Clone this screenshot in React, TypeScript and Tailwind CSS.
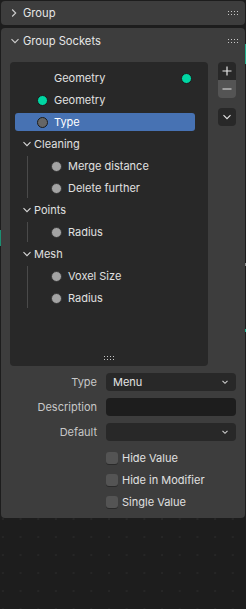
import React from 'react';

const font = { fontFamily: 'Inter, "DejaVu Sans", sans-serif' };

function Chevron({ open, className = '' }: { open: boolean; className?: string }) {
  return (
    <svg width="10" height="10" viewBox="0 0 10 10" className={`shrink-0 ${className}`}>
      {open ? (
        <path d="M1.5 3.2 L5 6.7 L8.5 3.2" fill="none" stroke="currentColor" strokeWidth="1.1" />
      ) : (
        <path d="M3.2 1.5 L6.7 5 L3.2 8.5" fill="none" stroke="currentColor" strokeWidth="1.1" />
      )}
    </svg>
  );
}

function Grip({ className = '' }: { className?: string }) {
  return (
    <div className={`grid grid-cols-4 gap-x-[2px] gap-y-[2px] ${className}`}>
      {Array.from({ length: 8 }).map((_, i) => (
        <span key={i} className="w-[1px] h-[1px] bg-[#c8c8c8]" />
      ))}
    </div>
  );
}

function Socket({ color }: { color: string }) {
  return <span className={`block shrink-0 w-[11px] h-[11px] rounded-full border ${color}`} />;
}

type Item =
  | { kind: 'out'; label: string }
  | { kind: 'in'; label: string; color: string; selected?: boolean }
  | { kind: 'panel'; label: string; children: string[] };

const items: Item[] = [
  { kind: 'out', label: 'Geometry' },
  { kind: 'in', label: 'Geometry', color: 'bg-[#00d6a3] border-[#1b1b1b]' },
  { kind: 'in', label: 'Type', color: 'bg-[#666666] border-[#1b1b1b]', selected: true },
  { kind: 'panel', label: 'Cleaning', children: ['Merge distance', 'Delete further'] },
  { kind: 'panel', label: 'Points', children: ['Radius'] },
  { kind: 'panel', label: 'Mesh', children: ['Voxel Size', 'Radius'] },
];

function Row({ item }: { item: Item }) {
  if (item.kind === 'out') {
    return (
      <div className="h-[22px] flex items-center">
        <span className="ml-[39px] text-[#e0e0e0]">{item.label}</span>
        <span className="ml-auto mr-[16px]">
          <Socket color="bg-[#00d6a3] border-[#1b1b1b]" />
        </span>
      </div>
    );
  }
  if (item.kind === 'in') {
    return (
      <div className="h-[22px] flex items-center">
        <div
          className={`h-[18px] w-[180px] flex items-center rounded-[3px] ${
            item.selected ? 'bg-[#4772b3] text-white' : 'text-[#e0e0e0]'
          }`}
        >
          <span className="ml-[22px]">
            <Socket color={item.color} />
          </span>
          <span className="ml-[6px]">{item.label}</span>
        </div>
      </div>
    );
  }
  return (
    <div>
      <div className="h-[22px] flex items-center text-[#e0e0e0]">
        <Chevron open className="ml-[7px] text-[#d8d8d8]" />
        <span className="ml-[2px]">{item.label}</span>
      </div>
      <div className="relative">
        <span className="absolute left-[12px] top-[1px] bottom-[1px] w-[1px] bg-[#4a4a4a]" />
        {item.children.map((c, i) => (
          <div key={i} className="h-[22px] flex items-center text-[#e0e0e0]">
            <span className="ml-[36px]">
              <Socket color="bg-[#a3a3a3] border-[#333333]" />
            </span>
            <span className="ml-[6px]">{c}</span>
          </div>
        ))}
      </div>
    </div>
  );
}

function Field({ label, value, dropdown }: { label: string; value?: string; dropdown?: boolean }) {
  return (
    <div className="flex items-center h-[18px]">
      <span className="w-[87px] text-right text-[#c8c8c8]">{label}</span>
      <div
        className={`ml-[9px] w-[130px] h-[18px] rounded-[4px] flex items-center px-[7px] ${
          dropdown ? 'bg-[#282828]' : 'bg-[#1d1d1d]'
        }`}
      >
        <span className="text-[#e4e4e4]">{value}</span>
        {dropdown && (
          <svg width="8" height="8" viewBox="0 0 8 8" className="ml-auto text-[#cfcfcf]">
            <path d="M1.5 2.8 L4 5.3 L6.5 2.8" fill="none" stroke="currentColor" strokeWidth="1.1" />
          </svg>
        )}
      </div>
    </div>
  );
}

function Check({ label }: { label: string }) {
  return (
    <div className="flex items-center h-[22px] pl-[96px]">
      <span className="w-[12px] h-[12px] rounded-[3px] bg-[#545454] shadow-[0_1px_0_#2a2a2a]" />
      <span className="ml-[4px] text-[#e0e0e0]">{label}</span>
    </div>
  );
}

export default function App() {
  return (
    <div
      style={font}
      className="relative w-[246px] h-[609px] overflow-hidden bg-[#1d1d1d] text-[11px] leading-none bg-[radial-gradient(circle,#262626_0.7px,transparent_1px)] bg-[length:17.7px_18px] bg-[position:-6px_6px]"
    >
      {/* bits of the editor behind */}
      <span className="absolute right-0 top-[44px] w-[1px] h-[20px] bg-[#1fae8a]" />
      <span className="absolute right-0 top-[263px] w-[1px] h-[3px] bg-[#8a8a8a]" />
      <span className="absolute right-0 top-[329px] w-[1px] h-[3px] bg-[#1fae8a]" />
      <span className="absolute left-0 top-[230px] w-[1px] h-[16px] bg-[#1b8f72]" />

      <div className="flex flex-col pt-[1px] pl-[1px] w-[245px]">
        {/* Group panel (collapsed) */}
        <div className="h-[24px] bg-[#3d3d3d] rounded-[4px] flex items-center text-[#e6e6e6] text-[11.2px]">
          <Chevron open={false} className="ml-[8px] text-[#cfcfcf]" />
          <span className="ml-[4px] pt-[1px]">Group</span>
          <Grip className="ml-auto mr-[7px]" />
        </div>

        {/* Group Sockets panel */}
        <div className="mt-[3px] h-[490px] bg-[#3d3d3d] rounded-[4px] flex flex-col">
          <div className="h-[26px] flex items-center text-[#e6e6e6] text-[11.2px]">
            <Chevron open className="ml-[9px] text-[#cfcfcf]" />
            <span className="ml-[3px] pt-[1px]">Group Sockets</span>
            <Grip className="ml-auto mr-[7px]" />
          </div>

          <div className="flex mt-[8px] pl-[9px]">
            <div className="w-[198px] h-[304px] bg-[#282828] rounded-[4px] pt-[5px] pl-[5px] flex flex-col">
              {items.map((it, i) => (
                <Row key={i} item={it} />
              ))}
              <div className="mt-auto mb-[6px] flex justify-center pr-[5px]">
                <Grip />
              </div>
            </div>

            <div className="ml-[10px] flex flex-col">
              <div className="w-[18px] rounded-[4px] overflow-hidden flex flex-col">
                <div className="h-[18px] bg-[#282828] flex items-center justify-center">
                  <svg width="10" height="10" viewBox="0 0 10 10">
                    <path d="M5 0.5 V9.5 M0.5 5 H9.5" stroke="#e6e6e6" strokeWidth="1.2" />
                  </svg>
                </div>
                <div className="h-[18px] bg-[#545454] flex items-center justify-center">
                  <svg width="10" height="10" viewBox="0 0 10 10">
                    <path d="M0.5 5 H9.5" stroke="#e6e6e6" strokeWidth="1.2" />
                  </svg>
                </div>
              </div>
              <div className="mt-[10px] w-[18px] h-[18px] rounded-[4px] bg-[#282828] flex items-center justify-center">
                <svg width="10" height="10" viewBox="0 0 10 10">
                  <path d="M1.5 3.2 L5 6.7 L8.5 3.2" fill="none" stroke="#e6e6e6" strokeWidth="1.1" />
                </svg>
              </div>
            </div>
          </div>

          <div className="mt-[7px] flex flex-col gap-[7px] pl-[9px]">
            <Field label="Type" value="Menu" dropdown />
            <Field label="Description" />
            <Field label="Default" dropdown />
          </div>

          <div className="mt-[6px] flex flex-col pl-[9px]">
            <Check label="Hide Value" />
            <Check label="Hide in Modifier" />
            <Check label="Single Value" />
          </div>
        </div>
      </div>
    </div>
  );
}
